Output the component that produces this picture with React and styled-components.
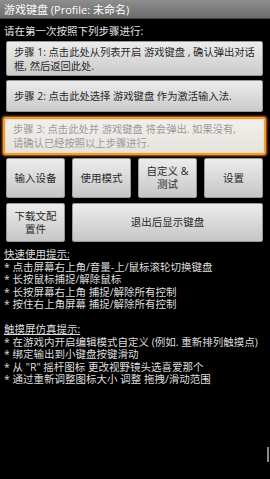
import styled, { createGlobalStyle } from "styled-components";

let GlobalStyle = createGlobalStyle`
  html, body {
    margin: 0;
    padding: 0;
    background: #000;
  }
  body {
    font-family: "Open Sans", "Noto Sans CJK SC", sans-serif;
  }
`;

let Screen = styled.div`
  position: relative;
  width: 270px;
  height: 479px;
  background: #000;
  overflow: hidden;
`;

let TitleBar = styled.div`
  height: 19px;
  line-height: 19px;
  padding-left: 4px;
  font-size: 11px;
  color: #fff;
  background: linear-gradient(#8e8e8e, #6c6c6c);
  border-bottom: 1px solid #444;
  box-sizing: border-box;
`;

let Content = styled.div`
  padding: 0 7px 0 6px;
`;

let Intro = styled.div`
  margin: 5px 0 0 -2px;
  height: 17px;
  line-height: 14px;
  font-size: 10.5px;
  color: #e4e4e4;
`;

let StepButton = styled.div`
  display: flex;
  align-items: center;
  min-height: ${(props) => props.$height}px;
  margin-bottom: 4px;
  padding: 0 7px;
  box-sizing: border-box;
  border-radius: 2px;
  background: linear-gradient(#ececec, #cacaca);
  border: 1px solid #9a9a9a;
  font-size: 10.3px;
  line-height: 14px;
  color: #2a2a2a;
  white-space: nowrap;
`;

let ActiveStep = styled(StepButton)`
  margin: 5px -3px 3px -3px;
  padding: 0 8px;
  background: linear-gradient(#f2f0ec, #e6e3dc);
  border: 2px solid #f39a36;
  box-shadow: 0 0 2px 1px #b86a1c, inset 0 0 2px #f7c27a;
  color: #9a9a9a;
`;

let ButtonGrid = styled.div`
  display: grid;
  grid-template-columns: repeat(4, 1fr);
  column-gap: 7px;
  row-gap: 5px;
`;

let GridButton = styled.div`
  display: flex;
  align-items: center;
  justify-content: center;
  text-align: center;
  height: ${(props) => props.$height}px;
  grid-column: span ${(props) => props.$span || 1};
  box-sizing: border-box;
  border-radius: 2px;
  background: linear-gradient(#ececec, #c6c6c6);
  border: 1px solid #9a9a9a;
  font-size: 10.5px;
  line-height: 13px;
  color: #2a2a2a;
`;

let Hints = styled.div`
  margin: 6px 0 0 -2px;
  font-size: 10.5px;
  line-height: 12.5px;
  color: #dedede;
`;

let HintTitle = styled.div`
  text-decoration: underline;
  margin-top: ${(props) => (props.$gap ? "12.5px" : "0")};
`;

let HintLine = styled.div`
  white-space: nowrap;
`;

let ScrollThumb = styled.div`
  position: absolute;
  right: 1px;
  top: 447px;
  width: 2px;
  height: 15px;
  background: #8a8a8a;
`;

let quickHints = [
  "* 点击屏幕右上角/音量-上/鼠标滚轮切换键盘",
  "* 长按鼠标捕捉/解除鼠标",
  "* 长按屏幕右上角 捕捉/解除所有控制",
  "* 按住右上角屏幕 捕捉/解除所有控制",
];

let touchHints = [
  "* 在游戏内开启编辑模式自定义 (例如. 重新排列触摸点)",
  "* 绑定输出到小键盘按键滑动",
  "* 从 \"R\" 摇杆图标 更改视野镜头选喜爱那个",
  "* 通过重新调整图标大小 调整 拖拽/滑动范围",
];

export default function App() {
  return (
    <Screen>
      <GlobalStyle />
      <TitleBar>游戏键盘 (Profile: 未命名)</TitleBar>
      <Content>
        <Intro>请在第一次按照下列步骤进行:</Intro>
        <StepButton $height={35}>
          <div>
            步骤 1: 点击此处从列表开启 游戏键盘 , 确认弹出对话
            <br />
            框, 然后返回此处.
          </div>
        </StepButton>
        <StepButton $height={32}>步骤 2: 点击此处选择 游戏键盘 作为激活输入法.</StepButton>
        <ActiveStep $height={38}>
          <div>
            步骤 3: 点击此处并 游戏键盘 将会弹出. 如果没有,
            <br />
            请确认已经按照以上步骤进行.
          </div>
        </ActiveStep>
        <ButtonGrid>
          <GridButton $height={40}>输入设备</GridButton>
          <GridButton $height={40}>使用模式</GridButton>
          <GridButton $height={40}>
            自定义 &amp;
            <br />
            测试
          </GridButton>
          <GridButton $height={40}>设置</GridButton>
          <GridButton $height={39}>
            下载文配
            <br />
            置件
          </GridButton>
          <GridButton $height={39} $span={3}>
            退出后显示键盘
          </GridButton>
        </ButtonGrid>
        <Hints>
          <HintTitle>快速使用提示:</HintTitle>
          {quickHints.map((line) => (
            <HintLine key={line}>{line}</HintLine>
          ))}
          <HintTitle $gap>触摸屏仿真提示:</HintTitle>
          {touchHints.map((line) => (
            <HintLine key={line}>{line}</HintLine>
          ))}
        </Hints>
      </Content>
      <ScrollThumb />
    </Screen>
  );
}
